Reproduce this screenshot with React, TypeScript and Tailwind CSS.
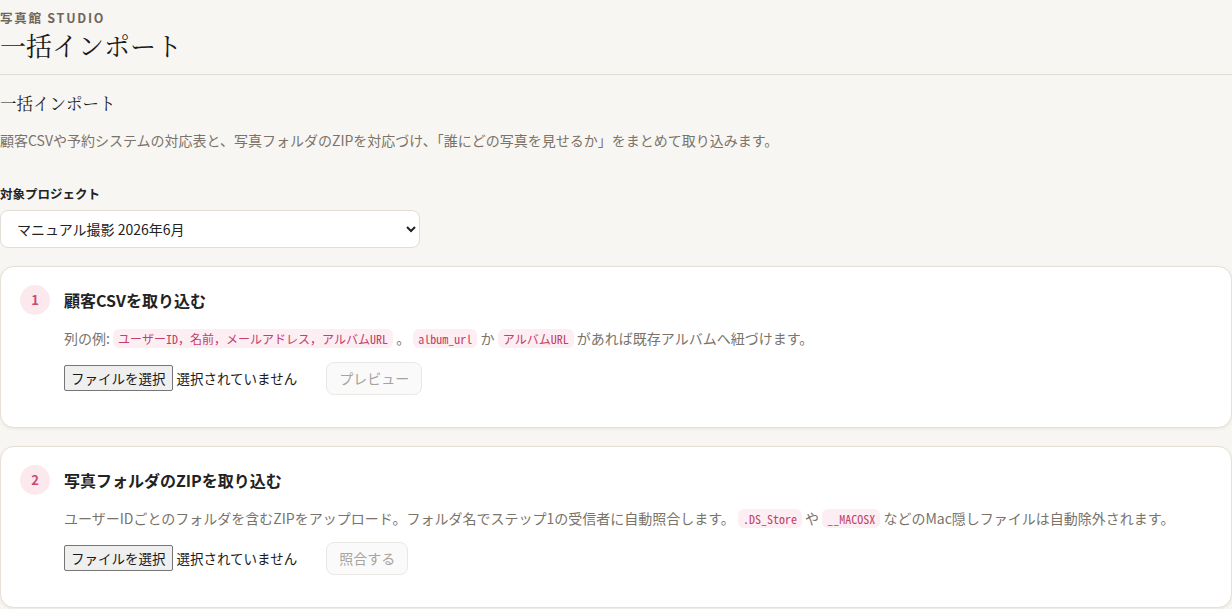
import React from "react";

const sans = { fontFamily: '"Noto Sans CJK JP", "Noto Sans", sans-serif' };
const serif = { fontFamily: '"Noto Serif CJK JP", "Liberation Serif", "Noto Sans CJK JP", serif' };
const mono = { fontFamily: '"Noto Sans Mono CJK JP", "Liberation Mono", monospace' };

function Code({ children }: { children: React.ReactNode }) {
  return (
    <code
      className="rounded-md bg-[#fceef2] px-[5px] py-[1px] text-[12px] font-normal text-[#c2406a]"
      style={mono}
    >
      {children}
    </code>
  );
}

function FakeFileInput() {
  return (
    <div className="flex items-center text-[13.5px] text-[#1a1a1a]">
      <span className="rounded-[2px] border border-[#767676] bg-[#efefef] px-[6px] py-[1px] leading-[22px]">
        ファイルを選択
      </span>
      <span className="ml-[4px]">選択されていません</span>
    </div>
  );
}

interface StepCardProps {
  num: number;
  title: string;
  children: React.ReactNode;
  action: string;
}

function StepCard({ num, title, children, action }: StepCardProps) {
  return (
    <section className="rounded-[14px] border border-[#e6e0d6] bg-white px-[19px] pt-[18px] pb-[32px] shadow-[0_1px_3px_rgba(60,50,40,0.08)]">
      <div className="flex items-center gap-[14px]">
        <div className="flex h-[30px] w-[30px] items-center justify-center rounded-full bg-[#fce9ee] text-[13px] font-bold text-[#c84a70]">
          {num}
        </div>
        <h2 className="text-[16px] font-bold text-[#222]">{title}</h2>
      </div>
      <div className="pl-[44px]">
        <p className="mt-[12px] text-[14px] leading-[22px] text-[#7a736a]">{children}</p>
        <div className="mt-[12px] flex items-center gap-[29px]">
          <FakeFileInput />
          <button
            disabled
            className="h-[33px] rounded-lg border border-[#ebe8e3] bg-[#fafafa] px-[12px] text-[14px] text-[#a8a39c]"
          >
            {action}
          </button>
        </div>
      </div>
    </section>
  );
}

export default function App() {
  return (
    <div className="min-h-[609px] bg-[#f8f6f2] text-[#222]" style={sans}>
      {/* ヘッダー */}
      <header className="border-b border-[#e2ddd5] pb-[13px] pt-[9px]">
        <p className="text-[12.5px] font-bold tracking-[0.14em] text-[#6e665c]">写真館 STUDIO</p>
        <h1 className="mt-[1px] text-[26px] leading-[32px] text-[#1a1a1a]" style={serif}>
          一括インポート
        </h1>
      </header>

      <main className="pt-[16px]">
        <h2 className="text-[16.5px] leading-[24px] text-[#222]" style={serif}>
          一括インポート
        </h2>
        <p className="mt-[14px] text-[14px] leading-[22px] text-[#7a736a]">
          顧客CSVや予約システムの対応表と、写真フォルダのZIPを対応づけ、「誰にどの写真を見せるか」をまとめて取り込みます。
        </p>

        {/* 対象プロジェクト */}
        <label className="mt-[34px] block text-[12.5px] font-bold text-[#222]">対象プロジェクト</label>
        <select
          className="mt-[6px] h-[38px] w-[420px] rounded-lg border border-[#e2ddd5] bg-white px-[12px] text-[14px] text-[#222]"
          defaultValue="manual"
        >
          <option value="manual">マニュアル撮影 2026年6月</option>
        </select>

        <div className="mt-[18px] flex flex-col gap-[18px]">
          <StepCard num={1} title="顧客CSVを取り込む" action="プレビュー">
            列の例: <Code>ユーザーID，名前，メールアドレス，アルバムURL</Code> 。 <Code>album_url</Code> か{" "}
            <Code>アルバムURL</Code> があれば既存アルバムへ紐づけます。
          </StepCard>
          <StepCard num={2} title="写真フォルダのZIPを取り込む" action="照合する">
            ユーザーIDごとのフォルダを含むZIPをアップロード。フォルダ名でステップ1の受信者に自動照合します。{" "}
            <Code>.DS_Store</Code> や <Code>__MACOSX</Code> などのMac隠しファイルは自動除外されます。
          </StepCard>
        </div>
      </main>
    </div>
  );
}
